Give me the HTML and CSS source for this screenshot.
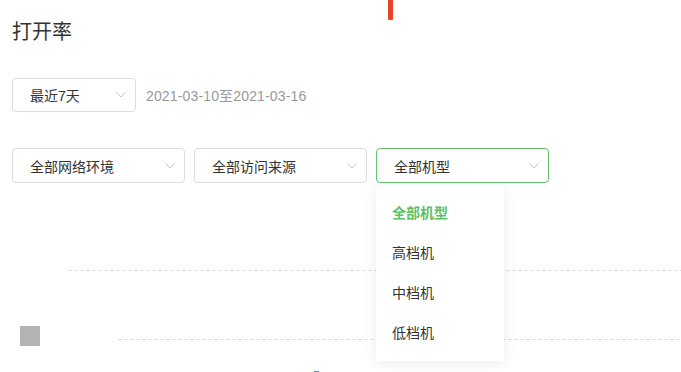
FILE: index.html
```html
<!DOCTYPE html>
<html lang="zh-CN">
<head>
    <meta charset="UTF-8">
    <title>打开率</title>
    <link rel="stylesheet" href="styles.css">
</head>
<body>
<div class="page">
    <span class="bar-red"></span>

    <h2 class="title">打开率</h2>

    <div class="row row-date">
        <div class="select select-sm">
            <span>最近7天</span>
            <svg class="arrow" width="10" height="6" viewBox="0 0 10 6"><polyline points="0.5,0.5 5,5 9.5,0.5" fill="none" stroke="#c4c4c4" stroke-width="1"/></svg>
        </div>
        <span class="range">2021-03-10至2021-03-16</span>
    </div>

    <div class="row row-filter">
        <div class="select">
            <span>全部网络环境</span>
            <svg class="arrow" width="10" height="6" viewBox="0 0 10 6"><polyline points="0.5,0.5 5,5 9.5,0.5" fill="none" stroke="#c4c4c4" stroke-width="1"/></svg>
        </div>
        <div class="select">
            <span>全部访问来源</span>
            <svg class="arrow" width="10" height="6" viewBox="0 0 10 6"><polyline points="0.5,0.5 5,5 9.5,0.5" fill="none" stroke="#c4c4c4" stroke-width="1"/></svg>
        </div>
        <div class="select-wrap">
            <div class="select focus">
                <span>全部机型</span>
                <svg class="arrow" width="10" height="6" viewBox="0 0 10 6"><polyline points="0.5,0.5 5,5 9.5,0.5" fill="none" stroke="#c4c4c4" stroke-width="1"/></svg>
            </div>
            <ul class="menu">
                <li class="on">全部机型</li>
                <li>高档机</li>
                <li>中档机</li>
                <li>低档机</li>
            </ul>
        </div>
    </div>

    <!-- 图表区域 -->
    <div class="chart">
        <div class="grid-line line1"></div>
        <div class="grid-line line2"></div>
        <span class="legend"></span>
        <span class="bar-blue"></span>
    </div>
</div>
</body>
</html>
```

FILE: styles.css
```css
*{
    margin: 0;padding: 0;
    box-sizing: border-box;
}
html,body{
    overflow: hidden;
    background: #fff;
}
body{
    font-family: "Liberation Sans", "Noto Sans CJK SC", sans-serif;
    color: #333;
    font-size: 14px;
}
ul,li{list-style: none}

.page{
    position: relative;
    padding: 0 12px;
    height: 372px;
}
.bar-red{
    position: absolute;
    left: 388px;
    top: 0;
    width: 5px;
    height: 20px;
    background: #e8442a;
    border-radius: 0 0 1px 1px;
}
.title{
    font-size: 20px;
    font-weight: normal;
    line-height: 24px;
    padding-top: 20px;
    color: #333;
}

.row{
    display: flex;
    align-items: center;
}
.row-date{
    margin-top: 34px;
    gap: 10px;
}
.row-filter{
    margin-top: 36px;
    gap: 9px;
}

.select{
    width: 173px;
    height: 35px;
    border: 1px solid #dcdcdc;
    border-radius: 4px;
    padding: 0 9px 0 17px;
    display: flex;
    align-items: center;
    justify-content: space-between;
    background: #fff;
    color: #333;
}
.select-sm{
    width: 124px;
    height: 34px;
}
.select.focus{
    border-color: #62c36c;
}
.arrow{display: block}
.range{
    color: #999;
    font-size: 14px;
    letter-spacing: 0.15px;
}

.select-wrap{
    position: relative;
    z-index: 5;
}
.menu{
    position: absolute;
    left: 0;
    top: 37px;
    width: 128px;
    padding: 8px 16px;
    background: #fff;
    border-radius: 4px;
    box-shadow: 0 2px 14px rgba(0,0,0,0.08);
}
.menu li{
    height: 40px;
    line-height: 40px;
    color: #333;
}
.menu li.on{
    color: #5cc168;
    font-weight: 600;
}

.chart{
    position: relative;
    height: 189px;
    margin: 0 -12px;
}
.grid-line{
    position: absolute;
    right: 0;
    height: 1px;
    background-image: linear-gradient(to right, #dedede 4px, transparent 4px);
    background-size: 6px 1px;
    background-repeat: repeat-x;
}
.line1{left: 68px; top: 87px}
.line2{left: 118px; top: 156px}
.legend{
    position: absolute;
    left: 20px;
    top: 143px;
    width: 20px;
    height: 20px;
    background: #b3b3b3;
}
.bar-blue{
    position: absolute;
    left: 314px;
    top: 188px;
    width: 5px;
    height: 6px;
    background: #4a8df0;
}
```
